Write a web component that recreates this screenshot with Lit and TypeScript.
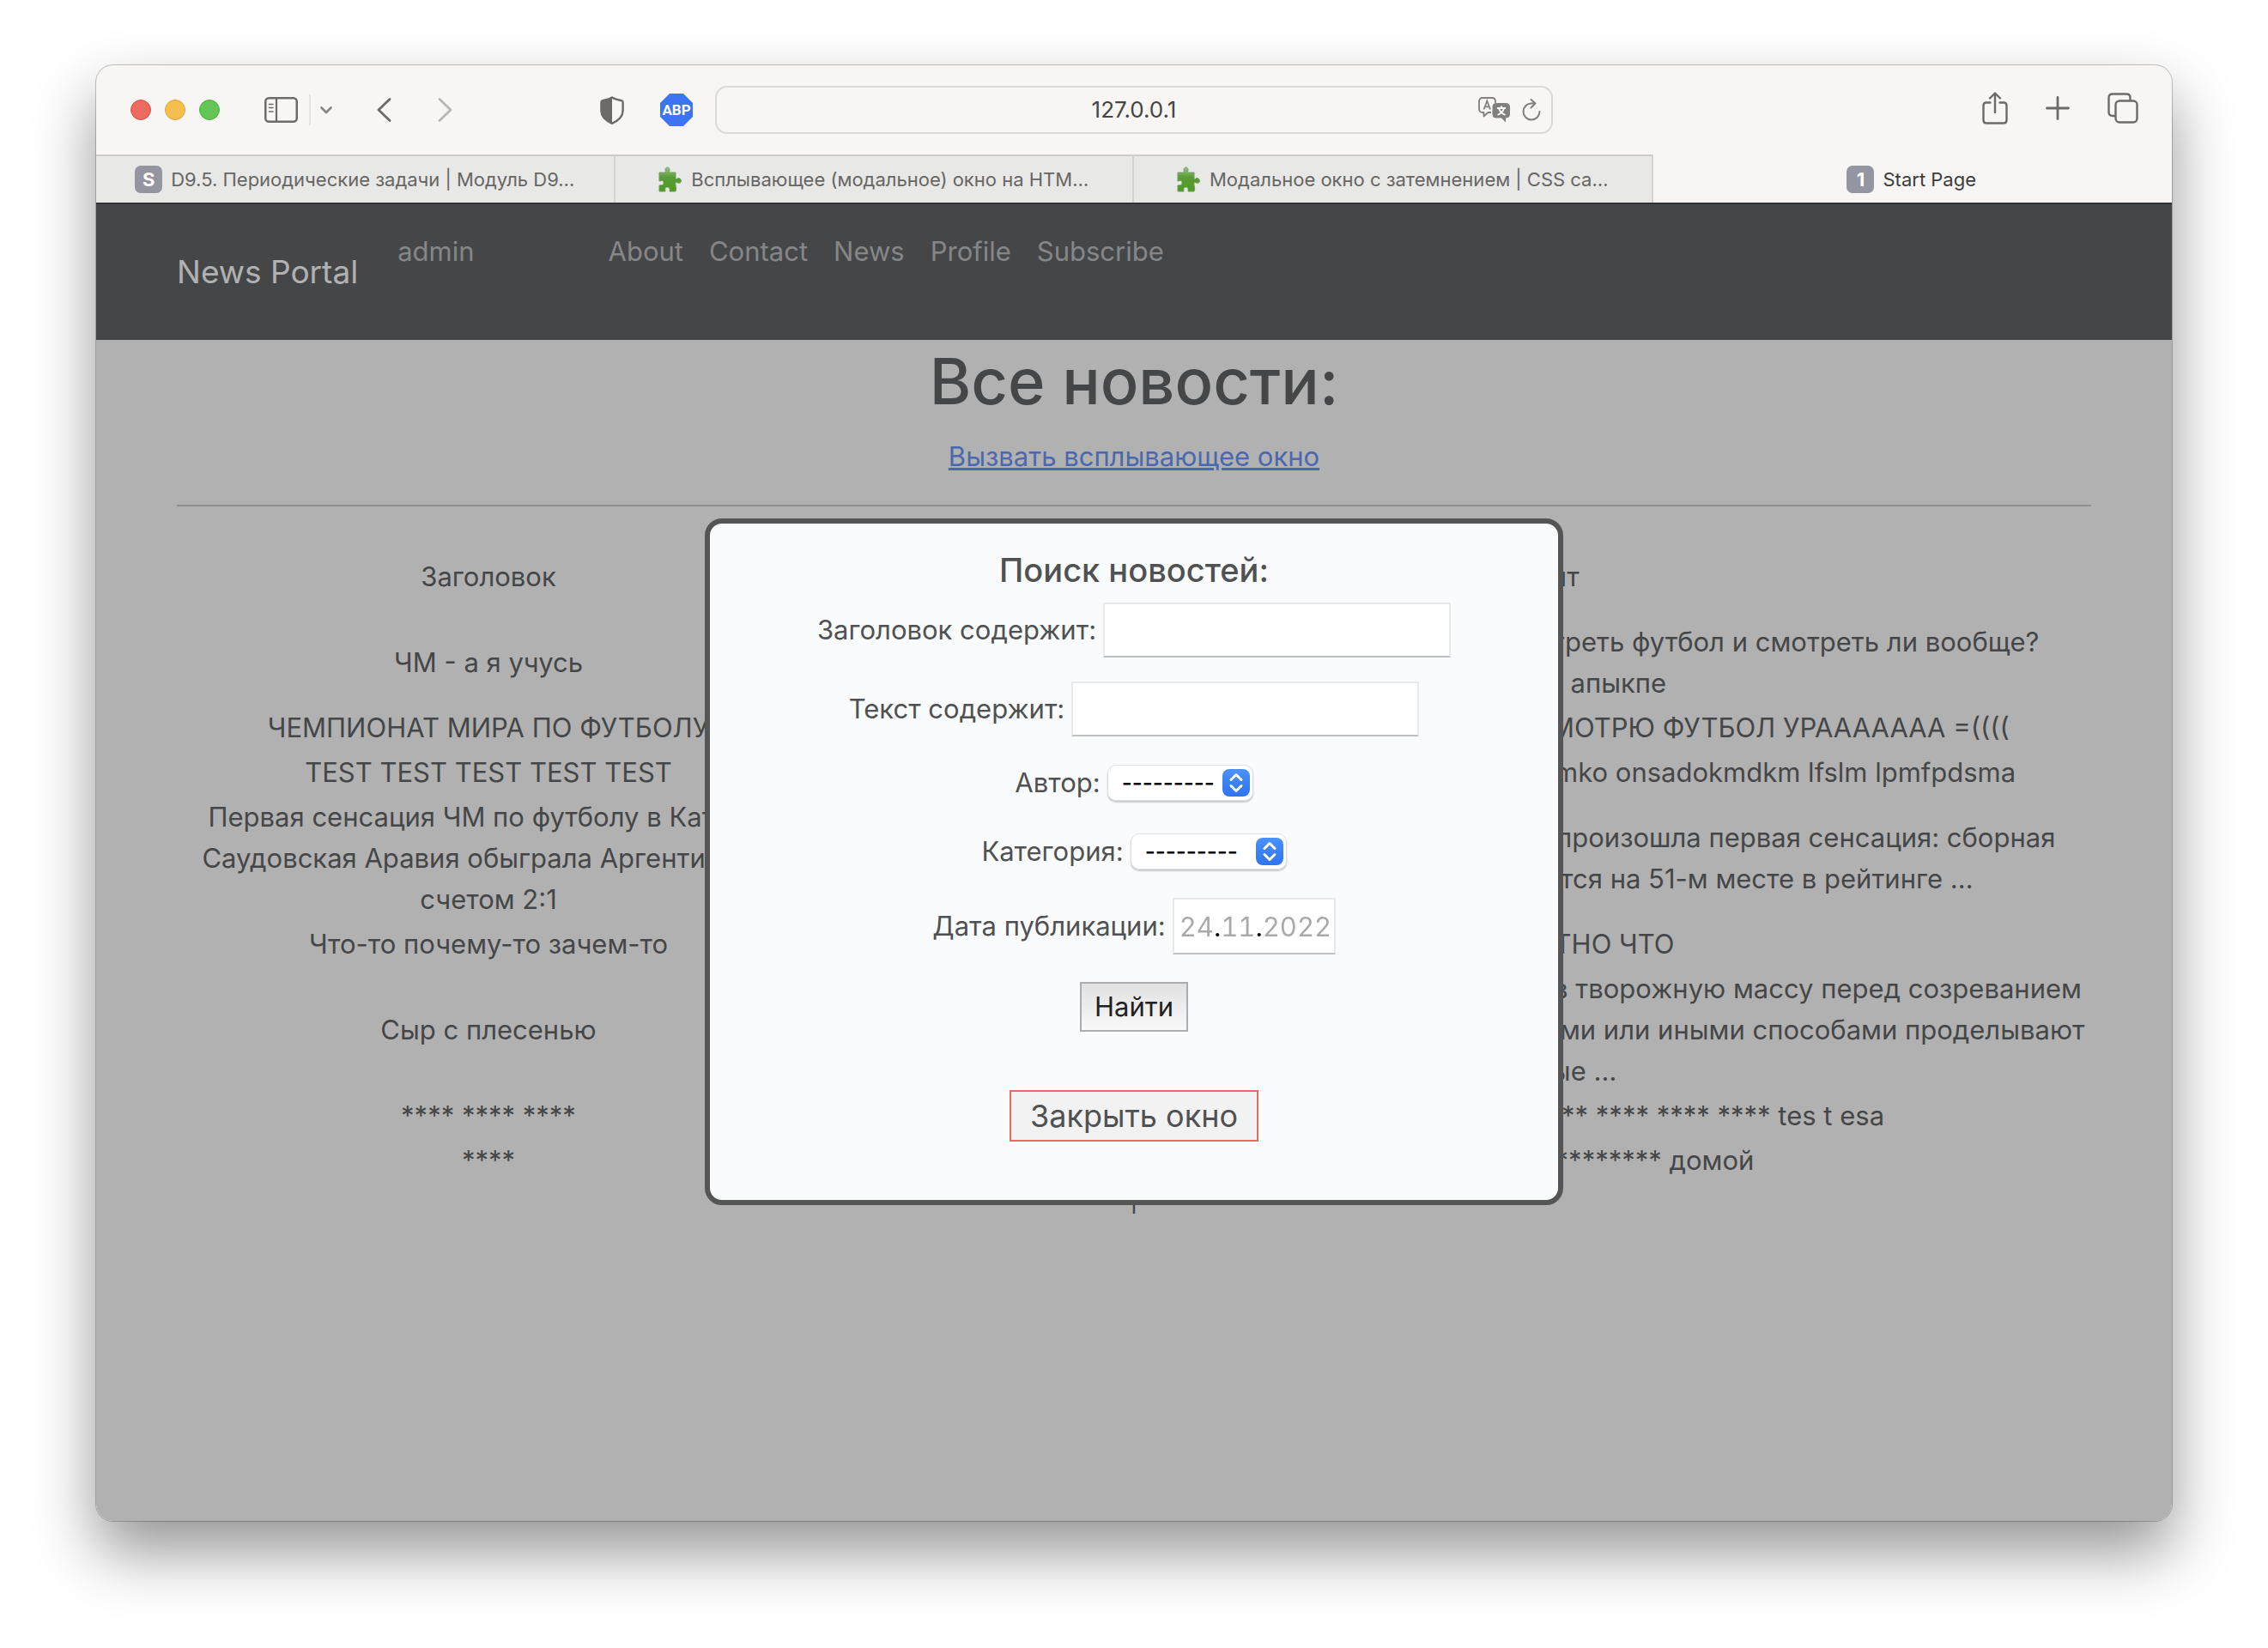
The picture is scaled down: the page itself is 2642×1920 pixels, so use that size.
import { LitElement, html, css, svg } from "lit";
import { customElement } from "lit/decorators.js";
import { classMap } from "lit/directives/class-map.js";

const FONT = css`Inter, "Liberation Sans", sans-serif`;

const reset = css`
  * {
    box-sizing: border-box;
  }
  button {
    padding: 0;
    border: 0;
    background: none;
    font: inherit;
    color: inherit;
  }
  a {
    color: inherit;
    text-decoration: none;
  }
  ul {
    margin: 0;
    padding: 0;
    list-style: none;
  }
  svg {
    display: block;
  }
`;

interface Tab {
  icon: string;
  title: string;
  active?: boolean;
}

const TABS: Tab[] = [
  { icon: "S", title: "D9.5. Периодические задачи | Модуль D9…" },
  { icon: "puzzle", title: "Всплывающее (модальное) окно на HTM…" },
  { icon: "puzzle", title: "Модальное окно с затемнением | CSS са…" },
  { icon: "1", title: "Start Page", active: true },
];

const NAV_LINKS = ["About", "Contact", "News", "Profile", "Subscribe"];

interface NewsItem {
  title: string[];
  content: string[];
}

const NEWS: NewsItem[] = [
  {
    title: ["ЧМ - а я учусь"],
    content: [
      "Все вокруг решают, где им в тот раз смотреть футбол и смотреть ли вообще?",
      "ывапвапролд апыкпе",
    ],
  },
  {
    title: ["ЧЕМПИОНАТ МИРА ПО ФУТБОЛУ"],
    content: ["А Я НЕ УЧУСЬ, А ПОЧТИ ВЕСЬ ДЕНЬ СМОТРЮ ФУТБОЛ УРААААААА =(((("],
  },
  {
    title: ["TEST TEST TEST TEST TEST"],
    content: ["sdmfk asldks lksmdf oaskdm pokasmd lamko onsadokmdkm lfslm lpmfpdsma"],
  },
  {
    title: ["Первая сенсация ЧМ по футболу в Катаре:", "Саудовская Аравия обыграла Аргентину со", "счетом 2:1"],
    content: [
      "На чемпионате мира по футболу в Катаре произошла первая сенсация: сборная",
      "Саудовской Аравии, которая находится на 51-м месте в рейтинге …",
    ],
  },
  { title: ["Что-то почему-то зачем-то"], content: ["ВОТ НЕПОНЯТНО ЧТО"] },
  {
    title: ["Сыр с плесенью"],
    content: [
      "Голубой сыр получают: плесень добавляют в творожную массу перед созреванием",
      "сыра, а потом уже и в готовых головках иглами или иными способами проделывают",
      "воздушные …",
    ],
  },
  {
    title: ["**** **** ****"],
    content: ["**** **** **** **** **** **** **** **** **** **** tes t esa"],
  },
  { title: ["****"], content: ["******** ********* ********* домой"] },
];

const puzzle = svg`
  <svg width="28" height="30" viewBox="0 0 28 30" aria-hidden="true">
    <defs>
      <linearGradient id="leaf" x1="0" y1="0" x2="0" y2="1">
        <stop offset="0" stop-color="#9cc58c" />
        <stop offset="0.4" stop-color="#5a9c35" />
        <stop offset="1" stop-color="#4f9a22" />
      </linearGradient>
    </defs>
    <path fill="url(#leaf)" stroke="#6f9f5c" stroke-width="1"
      d="M1 7H8C9 7 8 5 8 4C8 0 13 0 13 4C13 5 12 7 13 7H20V13C20 15 21 15 22 14C26 12 28 18 25 19C23 20 20 17 20 19C19 22 22 24 20 29H13C13 27 14 24 10 24C7 24 8 27 8 29H1V22C3 21 6 23 6 19C6 15 3 17 1 17Z" />
  </svg>`;

@customElement("browser-toolbar")
class BrowserToolbar extends LitElement {
  static styles = [
    reset,
    css`
      :host {
        display: grid;
        grid-template-columns: 1fr 976px 1fr;
        align-items: center;
        height: 104px;
        color: #6c6b69;
        font-family: ${FONT};
      }
      .side {
        display: flex;
        align-items: center;
      }
      .left {
        padding: 0 26px 0 40px;
      }
      .right {
        justify-content: flex-end;
        padding: 0 39px 4px 0;
        gap: 44px;
      }
      .lights {
        display: flex;
        gap: 16px;
        margin-right: 52px;
      }
      .light {
        width: 24px;
        height: 24px;
        border-radius: 50%;
        border: 1px solid;
      }
      .close {
        background: #ed6a5e;
        border-color: #d5564b;
      }
      .minimize {
        background: #f5bf4f;
        border-color: #dba33a;
      }
      .zoom {
        background: #62c554;
        border-color: #4fae41;
      }
      .divider {
        width: 2px;
        height: 36px;
        margin: 0 11px 0 13px;
        background: #e5e4e2;
      }
      .chevron {
        color: #85858a;
      }
      .back {
        margin: 0 54px 0 52px;
      }
      .forward {
        color: #b8b7b5;
      }
      .shield {
        margin-left: auto;
        margin-right: 42px;
      }
      .abp {
        width: 38px;
        height: 38px;
        background: #3c74f2;
        clip-path: polygon(29% 0, 71% 0, 100% 29%, 100% 71%, 71% 100%, 29% 100%, 0 71%, 0 29%);
        color: #fff;
        font: 700 17px/38px Roboto, sans-serif;
        text-align: center;
      }
      .address {
        display: grid;
        grid-template-columns: 1fr auto 1fr;
        align-items: center;
        height: 56px;
        padding: 0 12px;
        border: 2px solid #dad9d7;
        border-radius: 14px;
      }
      .url {
        grid-column: 2;
        width: 240px;
        padding: 0;
        border: 0;
        background: none;
        color: #454543;
        font: 400 26px/32px ${FONT};
        text-align: center;
      }
      .tools {
        display: flex;
        align-items: center;
        justify-content: flex-end;
        gap: 14px;
        color: #80807e;
      }
    `,
  ];

  render() {
    return html`
      <div class="side left">
        <div class="lights">
          <button class="light close" aria-label="Close window"></button>
          <button class="light minimize" aria-label="Minimize window"></button>
          <button class="light zoom" aria-label="Zoom window"></button>
        </div>
        <button aria-label="Sidebar">
          <svg width="39" height="30" viewBox="0 0 39 30" fill="none" stroke="currentColor">
            <rect x="1.25" y="1.25" width="36.5" height="27.5" rx="4" stroke-width="2.5" />
            <path d="M14 1V29" stroke-width="2.2" />
            <path d="M5.5 8.5H10M5.5 12.5H10M5.5 17H10" stroke-width="1.6" stroke-linecap="round" />
          </svg>
        </button>
        <span class="divider"></span>
        <button class="chevron" aria-label="Tab groups">
          <svg width="14" height="9" viewBox="0 0 14 9" fill="none" stroke="currentColor" stroke-width="2.6" stroke-linecap="round" stroke-linejoin="round">
            <path d="M1.5 1.5L7 7L12.5 1.5" />
          </svg>
        </button>
        <button class="back" aria-label="Back">
          <svg width="17" height="28" viewBox="0 0 17 28" fill="none" stroke="currentColor" stroke-width="2.8" stroke-linecap="round" stroke-linejoin="round">
            <path d="M15 1.5L2 14L15 26.5" />
          </svg>
        </button>
        <button class="forward" aria-label="Forward">
          <svg width="17" height="28" viewBox="0 0 17 28" fill="none" stroke="currentColor" stroke-width="2.8" stroke-linecap="round" stroke-linejoin="round">
            <path d="M2 1.5L15 14L2 26.5" />
          </svg>
        </button>
        <button class="shield" aria-label="Privacy report">
          <svg width="28" height="33" viewBox="0 0 28 33" fill="none" stroke="currentColor" stroke-width="2.4" stroke-linejoin="round">
            <path d="M14 1.5C17 3.5 22 4.5 25 5.2C26 5.5 26.6 6 26.6 7V17C26.6 25 19 29.5 14 31.8C9 29.5 1.4 25 1.4 17V7C1.4 6 2 5.5 3 5.2C6 4.5 11 3.5 14 1.5Z" />
            <path d="M14 1.5V31.8C9 29.5 1.4 25 1.4 17V7C1.4 6 2 5.5 3 5.2C6 4.5 11 3.5 14 1.5Z" fill="currentColor" stroke="none" />
          </svg>
        </button>
        <button class="abp">ABP</button>
      </div>
      <div class="address">
        <input class="url" type="text" aria-label="Address" .value=${"127.0.0.1"} />
        <div class="tools">
          <button aria-label="Translate">
            <svg width="37" height="30" viewBox="0 0 37 30">
              <path fill="none" stroke="currentColor" stroke-width="1.8" stroke-linejoin="round"
                d="M15 18H11.5L6.5 22.5V18H5C2.5 18 1 16.5 1 14V5C1 2.5 2.5 1 5 1H16C18.5 1 20 2.5 20 5V7" />
              <path fill="currentColor" d="M21 7H32C35 7 37 9 37 11V20C37 23 35 24.5 32 24.5V29.5L27 24.5H21C18 24.5 16.5 23 16.5 20V11C16.5 9 18 7 21 7Z" />
              <path fill="none" stroke="currentColor" stroke-width="1.8" d="M6.5 14.5L10.3 4.5L14 14.5M7.8 11.3H12.8" />
              <path fill="none" stroke="#fff" stroke-width="1.8" d="M22 13H32M27 10.5V13M30 13C29 17 26 19.5 22.5 21M24 13C25 17 28 19.5 31.5 21" />
            </svg>
          </button>
          <button aria-label="Reload">
            <svg width="22" height="26" viewBox="0 0 22 26" fill="none" stroke="currentColor" stroke-width="2" stroke-linecap="round" stroke-linejoin="round">
              <path d="M20.5 15A9.5 9.5 0 1 1 11 5.5H15.5M10.5 1L15.5 5.5L10.5 10.5" />
            </svg>
          </button>
        </div>
      </div>
      <div class="side right">
        <button aria-label="Share">
          <svg width="30" height="38" viewBox="0 0 30 38" fill="none" stroke="currentColor" stroke-width="2.4" stroke-linecap="round" stroke-linejoin="round">
            <path d="M9.5 12.5H5C2.5 12.5 1.5 13.5 1.5 16V33C1.5 35.5 2.5 36.5 5 36.5H25C27.5 36.5 28.5 35.5 28.5 33V16C28.5 13.5 27.5 12.5 25 12.5H20.5" />
            <path d="M15 24V2M9 7.5L15 1.5L21 7.5" />
          </svg>
        </button>
        <button aria-label="New tab">
          <svg width="28" height="28" viewBox="0 0 28 28" stroke="currentColor" stroke-width="2.8" stroke-linecap="round">
            <path d="M14 1.5V26.5M1.5 14H26.5" />
          </svg>
        </button>
        <button aria-label="Tab overview">
          <svg width="36" height="36" viewBox="0 0 36 36" fill="none" stroke="currentColor" stroke-width="2.4">
            <rect x="9.5" y="9.5" width="25" height="25" rx="4.5" />
            <path d="M9.5 27H6C3 27 1.5 25.5 1.5 22.5V6C1.5 3 3 1.5 6 1.5H22C25 1.5 26.5 3 26.5 6V9.5" />
          </svg>
        </button>
      </div>
    `;
  }
}

@customElement("browser-tabs")
class BrowserTabs extends LitElement {
  static styles = [
    reset,
    css`
      :host {
        display: grid;
        grid-template-columns: repeat(4, 1fr);
        height: 56px;
        font: 400 22px/28px ${FONT};
        color: #666664;
      }
      .tab {
        display: flex;
        align-items: center;
        justify-content: center;
        gap: 10px;
        white-space: nowrap;
        background: #e8e8e6;
        border-top: 2px solid #cbcac8;
        border-right: 2px solid #d3d3d1;
      }
      .active {
        background: none;
        border-color: transparent;
        color: #3c3c3a;
      }
      .badge {
        width: 32px;
        height: 32px;
        border-radius: 7px;
        background: #9594a1;
        color: #fff;
        font: 700 22px/32px ${FONT};
        text-align: center;
      }
    `,
  ];

  render() {
    return html`${TABS.map(
      (tab) => html`
        <button class=${classMap({ tab: true, active: !!tab.active })}>
          ${tab.icon === "puzzle" ? puzzle : html`<span class="badge">${tab.icon}</span>`}
          <span>${tab.title}</span>
        </button>
      `
    )}`;
  }
}

@customElement("search-dialog")
class SearchDialog extends LitElement {
  static styles = [
    reset,
    css`
      :host {
        display: flex;
        flex-direction: column;
        align-items: center;
        gap: 14px;
        width: 1000px;
        box-sizing: border-box;
        padding: 30px 32px 68px;
        border: 6px solid #555;
        border-radius: 20px;
        background: #f9fbfd;
        color: #505152;
        font: 400 31px/48px ${FONT};
      }
      .title {
        margin: 0;
        font-size: 38px;
        font-weight: 500;
        line-height: 48px;
      }
      .form {
        display: flex;
        flex-direction: column;
        align-items: center;
        gap: 28px;
      }
      .row {
        display: flex;
        align-items: center;
        gap: 8px;
        min-height: 52px;
      }
      .field {
        display: block;
        width: 405px;
        height: 64px;
        padding: 0 6px;
        border: 2px solid;
        border-color: #e8e9eb #e8e9eb #bfc0c1;
        background: #fff;
        font: inherit;
      }
      .date-box {
        display: block;
        height: 66px;
        padding: 0 6px;
        border: 2px solid;
        border-color: #e8e9eb #e8e9eb #bfc0c1;
        background: #fff;
      }
      .date {
        display: block;
        width: 174px;
        height: 62px;
        padding: 0;
        border: 0;
        font: inherit;
        font-variant-numeric: tabular-nums;
        color: transparent;
        caret-color: #000;
        background: linear-gradient(
          90deg,
          #a9a9a9 40px,
          #000 40px,
          #000 49px,
          #a9a9a9 49px,
          #a9a9a9 88px,
          #000 88px,
          #000 97px,
          #a9a9a9 97px
        );
        background-clip: text;
        -webkit-background-clip: text;
      }
      .select {
        display: grid;
        align-items: center;
        justify-items: end;
      }
      .select > * {
        grid-area: 1 / 1;
      }
      .list {
        appearance: none;
        width: 170px;
        height: 42px;
        padding: 0 0 0 16px;
        border: 1px solid #dfe0e2;
        border-radius: 10px;
        background: #fff;
        box-shadow: 0 2px 2px rgba(0, 0, 0, 0.2);
        color: #000;
        font: 500 26px/40px ${FONT};
      }
      .wide {
        width: 182px;
      }
      .arrows {
        margin-right: 4px;
        pointer-events: none;
      }
      .submit {
        height: 58px;
        margin-top: 4px;
        padding: 0 15px;
        border: 2px solid #adadad;
        background: linear-gradient(#e1e1e1, #f9f9f9);
        color: #222;
      }
      .dismiss {
        height: 60px;
        margin-top: 54px;
        padding: 0 22px;
        border: 2px solid #e96861;
        background: #f2f2f2;
        font-size: 36px;
      }
    `,
  ];

  private arrows() {
    return html`
      <svg class="arrows" width="32" height="32" viewBox="0 0 32 32" aria-hidden="true">
        <defs>
          <linearGradient id="blue" x1="0" y1="0" x2="0" y2="1">
            <stop offset="0" stop-color="#4a92f9" />
            <stop offset="1" stop-color="#2f73f0" />
          </linearGradient>
        </defs>
        <rect width="32" height="32" rx="8" fill="url(#blue)" />
        <path d="M10 12.5L16 6.5L22 12.5M10 19.5L16 25.5L22 19.5" fill="none" stroke="#fff" stroke-width="3" stroke-linecap="round" stroke-linejoin="round" />
      </svg>
    `;
  }

  render() {
    return html`
      <h2 class="title">Поиск новостей:</h2>
      <form class="form" @submit=${(e: Event) => e.preventDefault()}>
        <div class="row">
          <label for="header">Заголовок содержит:</label>
          <input class="field" id="header" type="text" />
        </div>
        <div class="row">
          <label for="text">Текст содержит:</label>
          <input class="field" id="text" type="text" />
        </div>
        <div class="row">
          <label for="author">Автор:</label>
          <span class="select">
            <select class="list" id="author"><option>---------</option></select>
            ${this.arrows()}
          </span>
        </div>
        <div class="row">
          <label for="category">Категория:</label>
          <span class="select">
            <select class="list wide" id="category"><option>---------</option></select>
            ${this.arrows()}
          </span>
        </div>
        <div class="row">
          <label for="date">Дата публикации:</label>
          <span class="date-box"><input class="date" id="date" type="text" .value=${"24.11.2022"} /></span>
        </div>
        <button class="submit" type="submit">Найти</button>
      </form>
      <button class="dismiss" type="button">Закрыть окно</button>
    `;
  }
}

@customElement("news-page")
class NewsPage extends LitElement {
  static styles = [
    reset,
    css`
      :host {
        display: block;
        position: relative;
        background: #fcfcfc;
        color: #242628;
        font: 400 31px/48px ${FONT};
      }
      .navbar {
        display: flex;
        align-items: center;
        height: 160px;
        padding: 0 94px;
        border-top: 2px solid #000;
        background: #242628;
        color: #a4a6a8;
      }
      .brand {
        margin-right: 46px;
        color: #fcfcfc;
        font-size: 37px;
        line-height: 60px;
      }
      .menu {
        display: flex;
        align-self: flex-start;
        gap: 30px;
        margin-right: 156px;
        padding-top: 31px;
      }
      .main {
        padding: 0 94px;
        text-align: center;
      }
      .heading {
        margin: 0 0 16px;
        font-size: 74px;
        font-weight: 500;
        line-height: 96px;
      }
      .popup-link {
        color: #2e6af8;
        text-decoration: underline;
      }
      .rule {
        height: 2px;
        margin: 32px 0;
        border: 0;
        background: #b6b6b6;
      }
      .news {
        width: 100%;
        border-collapse: collapse;
        table-layout: fixed;
      }
      .news th,
      .news td {
        padding: 2px 0;
        font-weight: 400;
        white-space: nowrap;
      }
      .news th {
        height: 100px;
      }
      .news .name {
        width: 726px;
      }
      .news .content {
        padding-left: 190px;
      }
      .line {
        display: block;
      }
      .pages {
        line-height: 36px;
      }
      .overlay {
        position: absolute;
        inset: 0;
        display: grid;
        place-items: center;
        background: rgba(102, 102, 102, 0.5);
      }
    `,
  ];

  render() {
    return html`
      <header class="navbar">
        <a class="brand" href="#">News Portal</a>
        <ul class="menu">
          <li><a href="#">admin</a></li>
        </ul>
        <ul class="menu">
          ${NAV_LINKS.map((name) => html`<li><a href="#">${name}</a></li>`)}
        </ul>
      </header>
      <main class="main">
        <h1 class="heading">Все новости:</h1>
        <a class="popup-link" href="#">Вызвать всплывающее окно</a>
        <hr class="rule" />
        <table class="news">
          <thead>
            <tr>
              <th class="name">Заголовок</th>
              <th class="content">Контент</th>
            </tr>
          </thead>
          <tbody>
            ${NEWS.map(
              (item) => html`
                <tr>
                  <td>${item.title.map((line) => html`<span class="line">${line}</span>`)}</td>
                  <td class="content">${item.content.map((line) => html`<span class="line">${line}</span>`)}</td>
                </tr>
              `
            )}
          </tbody>
        </table>
        <div class="pages">|</div>
      </main>
      <div class="overlay">
        <search-dialog role="dialog" aria-label="Поиск новостей"></search-dialog>
      </div>
    `;
  }
}

@customElement("app-root")
class AppRoot extends LitElement {
  static styles = css`
    :host {
      display: flex;
      box-sizing: border-box;
      min-height: 100vh;
      padding: 76px 112px 148px;
      overflow: hidden;
      background: #fff;
    }
    .window {
      flex: 1;
      display: flex;
      flex-direction: column;
      overflow: hidden;
      border-radius: 20px;
      background: #f7f6f4;
      box-shadow: 0 0 0 1px rgba(0, 0, 0, 0.22), 0 36px 72px rgba(0, 0, 0, 0.42);
    }
    .page {
      flex: 1;
    }
  `;

  render() {
    return html`
      <div class="window">
        <browser-toolbar></browser-toolbar>
        <browser-tabs></browser-tabs>
        <news-page class="page"></news-page>
      </div>
    `;
  }
}
